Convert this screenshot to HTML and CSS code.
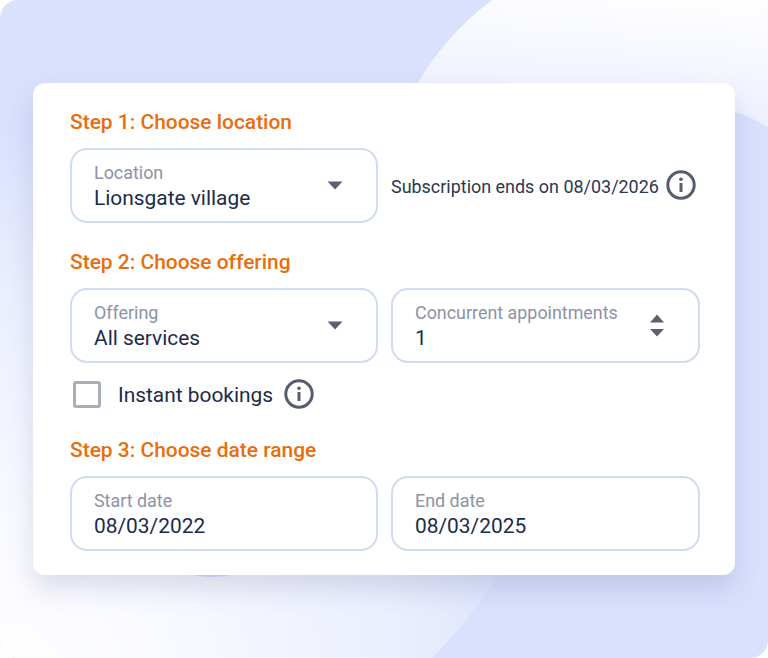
FILE: index.html
```html
<!DOCTYPE html>
<html lang="en">
<head>
<meta charset="utf-8">
<title>Booking setup</title>
<link rel="stylesheet" href="styles.css">
</head>
<body>
<div class="stage">
  <svg class="backdrop" viewBox="0 0 768 658" aria-hidden="true">
    <defs>
      <linearGradient id="topGlow" x1="0.75" y1="0" x2="0.55" y2="1">
        <stop offset="0" stop-color="#fefeff"/>
        <stop offset="1" stop-color="#ebeffe"/>
      </linearGradient>
      <radialGradient id="bottomGlow" gradientUnits="userSpaceOnUse" cx="0" cy="690" r="560">
        <stop offset="0" stop-color="#ffffff"/>
        <stop offset="0.3" stop-color="#f9faff"/>
        <stop offset="0.7" stop-color="#ebeffe"/>
        <stop offset="1" stop-color="#dae1fd"/>
      </radialGradient>
    </defs>
    <path fill="url(#topGlow)" d="M492 0 C460 24 436 52 418 83 L418 90 L735 112 C747 116 758 121 768 127 L768 0 Z"/>
    <path fill="url(#bottomGlow)" d="M0 130 L60 130 L520 300 L500 570 C482 602 458 632 432 658 L0 658 Z"/>
    <ellipse cx="212" cy="571" rx="24" ry="6" fill="#d3dafa"/>
  </svg>
  <main class="card">
    <h2 class="step">Step 1: Choose location</h2>
    <div class="grid">
      <div class="field">
        <div class="field-text"><span class="label">Location</span><span class="value">Lionsgate village</span></div>
        <svg class="caret" viewBox="0 0 16 9"><path d="M0.5 0.5H15.5L8 8.5Z"/></svg>
      </div>
      <div class="note">
        <span class="note-text">Subscription ends on 08/03/2026</span>
        <svg class="info" viewBox="0 0 30 30"><circle cx="15" cy="15" r="13.2"/><rect class="info-mark" x="13.5" y="13" width="3" height="9" rx="0.6"/><circle class="info-mark" cx="15" cy="9.2" r="1.8"/></svg>
      </div>
    </div>

    <h2 class="step step-next">Step 2: Choose offering</h2>
    <div class="grid">
      <div class="field">
        <div class="field-text"><span class="label">Offering</span><span class="value">All services</span></div>
        <svg class="caret" viewBox="0 0 16 9"><path d="M0.5 0.5H15.5L8 8.5Z"/></svg>
      </div>
      <div class="field">
        <div class="field-text"><span class="label">Concurrent appointments</span><span class="value">1</span></div>
        <svg class="spinner" viewBox="0 0 16 23"><path d="M8 0.5L15 8.5H1Z"/><path d="M1 15H15L8 22.5Z"/></svg>
      </div>
    </div>
    <div class="check-row">
      <span class="checkbox"></span>
      <span class="check-label">Instant bookings</span>
      <svg class="info" viewBox="0 0 30 30"><circle cx="15" cy="15" r="13.2"/><rect class="info-mark" x="13.5" y="13" width="3" height="9" rx="0.6"/><circle class="info-mark" cx="15" cy="9.2" r="1.8"/></svg>
    </div>

    <h2 class="step step-last">Step 3: Choose date range</h2>
    <div class="grid">
      <div class="field">
        <div class="field-text"><span class="label">Start date</span><span class="value">08/03/2022</span></div>
      </div>
      <div class="field">
        <div class="field-text"><span class="label">End date</span><span class="value">08/03/2025</span></div>
      </div>
    </div>
  </main>
</div>
</body>
</html>
```
FILE: styles.css
```css
* { box-sizing: border-box; }
html, body { margin: 0; padding: 0; background: #fff; }
body { font-family: Roboto, "Liberation Sans", sans-serif; }

.stage {
  position: relative;
  width: 768px;
  height: 658px;
  padding: 83px 33px 0;
  background: #dae1fd;
  border-radius: 18px;
  overflow: hidden;
}
.backdrop { position: absolute; inset: 0; width: 768px; height: 658px; }

.card {
  position: relative;
  width: 702px;
  height: 492px;
  padding: 27px 35px 24px 37px;
  background: #fff;
  border-radius: 12px;
  box-shadow: 0 14px 26px rgba(70, 80, 130, 0.17);
}

.step {
  margin: 0 0 14px;
  font-size: 20.95px;
  line-height: 24px;
  font-weight: 500;
  color: #e96d0c;
}
.step-next { margin-top: 27px; }
.step-last { margin-top: 29px; }

.grid {
  display: grid;
  grid-template-columns: 308px 309px;
  column-gap: 13px;
}

.field {
  display: flex;
  align-items: center;
  justify-content: space-between;
  height: 75px;
  padding: 0 33px 0 22px;
  border: 2px solid #d0dcf2;
  border-radius: 17px;
  background: #fff;
}
.field-text { display: flex; flex-direction: column; margin-top: 1px; }
.label {
  font-size: 17.9px;
  line-height: 24px;
  color: #8b93a4;
}
.value {
  font-size: 20.9px;
  line-height: 27px;
  color: #1b2b4a;
}

.caret { width: 16px; height: 9px; margin-top: -1px; fill: #5a6072; }
.spinner { width: 16px; height: 23px; margin: -1px 0 0; fill: #5a6072; }

.note { display: flex; align-items: center; gap: 7px; margin-top: -1px; }
.note-text { font-size: 17.95px; line-height: 24px; color: #2b3852; margin-top: 4px; }

.info { width: 30px; height: 30px; flex: none; fill: none; stroke: #565d6e; stroke-width: 3; }
.info-mark { fill: #565d6e; stroke: none; }

.check-row {
  display: flex;
  align-items: center;
  height: 30px;
  margin-top: 16px;
  padding-left: 3px;
}
.checkbox {
  width: 28px;
  height: 27px;
  border: 3px solid #a9afba;
  border-radius: 3px;
}
.check-label {
  margin: 2px 11px 0 17px;
  font-size: 20.9px;
  line-height: 28px;
  color: #1b2b4a;
}
```
